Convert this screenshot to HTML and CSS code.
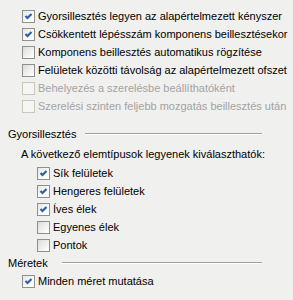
FILE: index.html
```html
<!DOCTYPE html>
<html lang="hu">
<head>
  <meta charset="UTF-8">
  <title>Beállítások</title>
  <link rel="stylesheet" href="styles.css">
</head>
<body>
  <div class="panel">

    <div class="list top">
      <label class="check"><span class="box on"><svg viewBox="0 0 11 11"><polyline points="2.5,5 4.5,7 8.5,3"/></svg></span>Gyorsillesztés legyen az alapértelmezett kényszer</label>
      <label class="check"><span class="box on"><svg viewBox="0 0 11 11"><polyline points="2.5,5 4.5,7 8.5,3"/></svg></span>Csökkentett lépésszám komponens beillesztésekor</label>
      <label class="check"><span class="box"></span>Komponens beillesztés automatikus rögzítése</label>
      <label class="check"><span class="box"></span>Felületek közötti távolság az alapértelmezett ofszet</label>
      <label class="check off"><span class="box"></span>Behelyezés a szerelésbe beállíthatóként</label>
      <label class="check off"><span class="box"></span>Szerelési szinten feljebb mozgatás beillesztés után</label>
    </div>

    <div class="group first">
      <span class="group-title">Gyorsillesztés</span>
      <span class="rule"></span>
    </div>
    <div class="hint">A következő elemtípusok legyenek kiválaszthatók:</div>
    <div class="list sub">
      <label class="check"><span class="box on"><svg viewBox="0 0 11 11"><polyline points="2.5,5 4.5,7 8.5,3"/></svg></span>Sík felületek</label>
      <label class="check"><span class="box on"><svg viewBox="0 0 11 11"><polyline points="2.5,5 4.5,7 8.5,3"/></svg></span>Hengeres felületek</label>
      <label class="check"><span class="box on"><svg viewBox="0 0 11 11"><polyline points="2.5,5 4.5,7 8.5,3"/></svg></span>Íves élek</label>
      <label class="check"><span class="box"></span>Egyenes élek</label>
      <label class="check"><span class="box"></span>Pontok</label>
    </div>

    <div class="group wide">
      <span class="group-title">Méretek</span>
      <span class="rule"></span>
    </div>
    <div class="list top">
      <label class="check"><span class="box on"><svg viewBox="0 0 11 11"><polyline points="2.5,5 4.5,7 8.5,3"/></svg></span>Minden méret mutatása</label>
    </div>

  </div>
</body>
</html>
```

FILE: styles.css
```css
body {
  margin: 0;
  background-color: #f0f0ee;
  font-family: "Liberation Sans", Arial, sans-serif;
  font-size: 11px;
  color: #000000;
}
.panel {
  width: 293px;
  height: 300px;
  padding-top: 7px;
  box-sizing: border-box;
}
.list {
  display: flex;
  flex-direction: column;
}
.list.top {
  padding-left: 22px;
}
.list.sub {
  padding-left: 37px;
}
.check {
  display: flex;
  align-items: center;
  height: 18px;
  gap: 3px;
  white-space: nowrap;
}
.check.off {
  color: #a3a3a3;
}
.box {
  width: 11px;
  height: 11px;
  border: 1px solid #8e8f8f;
  background: linear-gradient(135deg, #dcdcd7 0%, #f3f3f1 60%, #ffffff 100%);
  display: flex;
}
.box.on {
  background: linear-gradient(135deg, #e6e6e2 0%, #fbfbfa 60%, #ffffff 100%);
}
.check.off .box {
  border-color: #cac8bb;
  background: #f6f6f4;
}
.box svg {
  width: 11px;
  height: 11px;
}
.box polyline {
  fill: none;
  stroke: #2f5ea6;
  stroke-width: 2.2;
}
.group {
  display: flex;
  align-items: center;
  height: 18px;
  padding-left: 8px;
  padding-right: 31px;
  gap: 9px;
}
.group.first {
  margin-top: 10px;
}
.group.wide {
  gap: 14px;
}
.group-title {
  white-space: nowrap;
}
.rule {
  flex: 1;
  height: 0;
  border-top: 1px solid #a0a0a0;
  border-bottom: 1px solid #ffffff;
}
.hint {
  height: 18px;
  line-height: 18px;
  padding-left: 21px;
  margin-top: 2px;
  margin-bottom: 1px;
}
```
